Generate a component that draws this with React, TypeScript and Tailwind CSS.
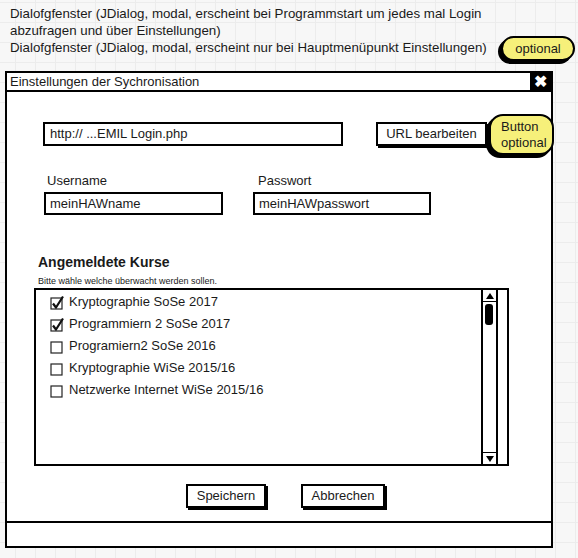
import React from 'react';

const font = { fontFamily: '"Liberation Sans", Arial, sans-serif' };

const courses = [
  { label: 'Kryptographie SoSe 2017', checked: true },
  { label: 'Programmiern 2 SoSe 2017', checked: true },
  { label: 'Programiern2 SoSe 2016', checked: false },
  { label: 'Kryptographie WiSe 2015/16', checked: false },
  { label: 'Netzwerke Internet WiSe 2015/16', checked: false },
];

function Check({ checked }: { checked: boolean }) {
  return (
    <svg width="15" height="15" viewBox="0 0 15 15" className="shrink-0">
      <rect x="1" y="3" width="11" height="11" fill="white" stroke="#222" strokeWidth="1.2" />
      {checked && <path d="M3 8.5 L6 12.5 L13 1.5" fill="none" stroke="#111" strokeWidth="2.2" strokeLinejoin="round" />}
    </svg>
  );
}

const App: React.FC = () => {
  return (
    <div
      style={font}
      className="relative w-[578px] h-[558px] overflow-hidden text-[#1a1a1a] bg-[#f7f7f7] bg-[linear-gradient(#ececec_1px,transparent_1px),linear-gradient(90deg,#ececec_1px,transparent_1px)] bg-[size:20px_20px] bg-[position:15px_2px]"
    >
      {/* notes */}
      <div className="pt-[5px] pl-[10px] text-[13.3px] leading-[17px]">
        <p>Dialofgfenster (JDialog, modal, erscheint bei Programmstart um jedes mal Login</p>
        <p>abzufragen und über Einstellungen)</p>
        <p>Dialofgfenster (JDialog, modal, erscheint nur bei Hauptmenüpunkt Einstellungen)</p>
      </div>
      <div className="absolute left-[501px] top-[36px] w-[74px] h-[25px] rounded-full bg-[#f6f07a] border-2 border-black shadow-[-3px_3px_0_#000] flex items-center justify-center text-[13px]">
        optional
      </div>

      {/* dialog */}
      <div className="ml-[5px] mt-[15px] w-[548px] h-[477px] border-2 border-black bg-white flex flex-col">
        <div className="h-[19px] border-b-2 border-black flex items-center justify-between">
          <span className="pl-[3px] text-[13px]">Einstellungen der Sychronisation</span>
          <span className="w-[21px] h-full bg-black text-white flex items-center justify-center text-[16px] font-bold leading-none">✖</span>
        </div>

        <div className="flex-1 flex flex-col">
          <div className="mt-[30px] flex items-center">
            <div className="ml-[36px] w-[300px] h-[24px] border-2 border-black flex items-center pl-[5px] text-[13px]">
              http:// ...EMIL Login.php
            </div>
            <div className="ml-[33px] w-[111px] h-[24px] border-2 border-black shadow-[2px_2px_0_#000] flex items-center justify-center text-[13px]">
              URL bearbeiten
            </div>
          </div>

          <div className="mt-[27px] flex">
            <div className="ml-[37px] w-[179px]">
              <div className="pl-[3px] text-[13px] leading-[16px]">Username</div>
              <div className="mt-[3px] h-[23px] border-2 border-black flex items-center pl-[4px] text-[13px]">meinHAWname</div>
            </div>
            <div className="ml-[30px] w-[178px]">
              <div className="pl-[5px] text-[13px] leading-[16px]">Passwort</div>
              <div className="mt-[3px] h-[23px] border-2 border-black flex items-center pl-[4px] text-[13px]">meinHAWpasswort</div>
            </div>
          </div>

          <div className="ml-[31px] mt-[39px] text-[14px] font-bold leading-[17px]">Angemeldete Kurse</div>
          <div className="ml-[31px] mt-[5px] text-[9px] leading-[10px]">Bitte wähle welche überwacht werden sollen.</div>

          <div className="ml-[27px] mt-[2px] w-[475px] h-[178px] border-2 border-black flex">
            <div className="flex-1 pt-[1px]">
              {courses.map((c) => (
                <div key={c.label} className="h-[22px] flex items-center gap-[4px] pl-[14px] text-[13px]">
                  <Check checked={c.checked} />
                  <span>{c.label}</span>
                </div>
              ))}
            </div>
            <div className="w-[17px] border-x-2 border-black flex flex-col">
              <div className="h-[12px] border-b border-black flex items-center justify-center">
                <svg width="8" height="6" viewBox="0 0 8 6"><path d="M4 0 L8 6 L0 6 Z" fill="#000" /></svg>
              </div>
              <div className="ml-[2px] mt-[2px] w-[8px] h-[21px] rounded-[3px] bg-black" />
              <div className="flex-1" />
              <div className="h-[12px] border-t border-black flex items-center justify-center">
                <svg width="8" height="6" viewBox="0 0 8 6"><path d="M0 0 L8 0 L4 6 Z" fill="#000" /></svg>
              </div>
            </div>
            <div className="w-[9px]" />
          </div>

          <div className="mt-[18px] flex">
            <div className="ml-[179px] w-[80px] h-[24px] border-2 border-black shadow-[2px_2px_0_#000] flex items-center justify-center text-[13px]">
              Speichern
            </div>
            <div className="ml-[35px] w-[84px] h-[24px] border-2 border-black shadow-[2px_2px_0_#000] flex items-center justify-center text-[13px]">
              Abbrechen
            </div>
          </div>
        </div>

        <div className="h-[25px] border-t-2 border-black" />
      </div>

      <div className="absolute left-[489px] top-[114px] w-[65px] h-[41px] rounded-[14px] bg-[#f6f07a] border-2 border-black shadow-[-3px_3px_0_#000] pl-[10px] pt-[3px] text-[13px] leading-[16px]">
        <div>Button</div>
        <div>optional</div>
      </div>
    </div>
  );
};

export default App;
